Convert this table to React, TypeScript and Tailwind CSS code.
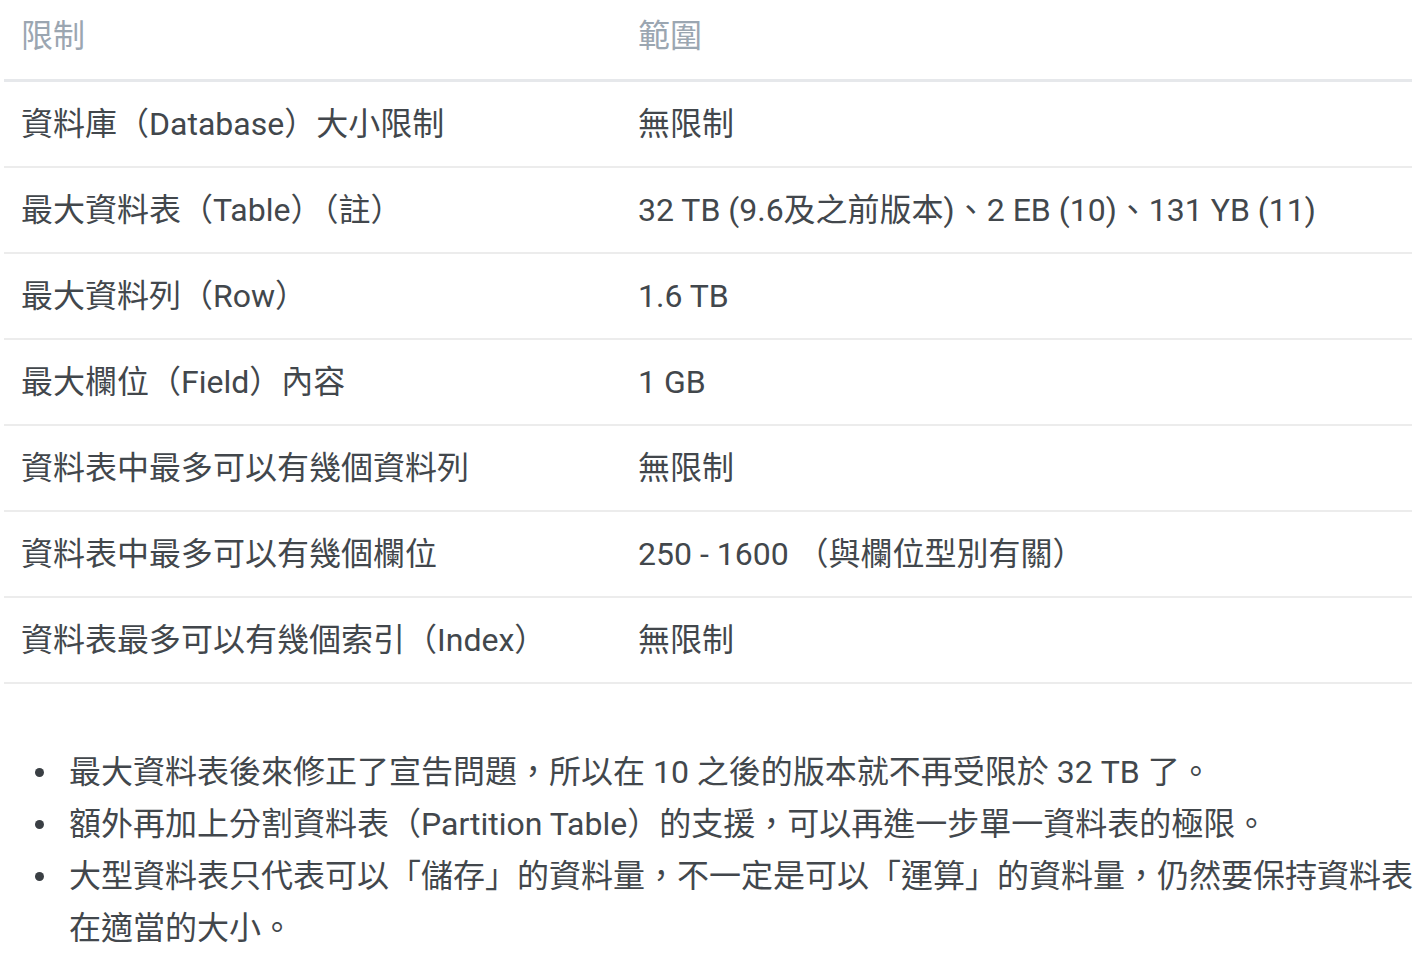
const rows: [string, string][] = [
  ["資料庫（Database）大小限制", "無限制"],
  ["最大資料表（Table）（註）", "32 TB (9.6及之前版本)、2 EB (10)、131 YB (11)"],
  ["最大資料列（Row）", "1.6 TB"],
  ["最大欄位（Field）內容", "1 GB"],
  ["資料表中最多可以有幾個資料列", "無限制"],
  ["資料表中最多可以有幾個欄位", "250 - 1600 （與欄位型別有關）"],
  ["資料表最多可以有幾個索引（Index）", "無限制"],
];

const notes = [
  "最大資料表後來修正了宣告問題，所以在 10 之後的版本就不再受限於 32 TB 了。",
  "額外再加上分割資料表（Partition Table）的支援，可以再進一步單一資料表的極限。",
  "大型資料表只代表可以「儲存」的資料量，不一定是可以「運算」的資料量，仍然要保持資料表在適當的大小。",
];

export default function App() {
  return (
    <div
      className="min-h-screen bg-white pl-[4px] text-[32px] text-[#42474c]"
      style={{ fontFamily: 'Roboto, "Noto Sans CJK TC", sans-serif' }}
    >
      <table className="w-[1408px] table-fixed border-collapse">
        <colgroup>
          <col className="w-[617px]" />
          <col />
        </colgroup>
        <thead>
          <tr className="border-b-[3px] border-[#e6e8eb]">
            <th className="px-[17px] pt-[12px] pb-[19px] text-left font-normal leading-[48px] text-[#9ba6b1]">限制</th>
            <th className="px-[17px] pt-[12px] pb-[19px] text-left font-normal leading-[48px] text-[#9ba6b1]">範圍</th>
          </tr>
        </thead>
        <tbody>
          {rows.map((row, i) => (
            <tr key={i} className="border-b-2 border-[#ececec]">
              <td className="px-[17px] py-[18px] leading-[48px] whitespace-nowrap">{row[0]}</td>
              <td className="px-[17px] py-[18px] leading-[48px] whitespace-nowrap">{row[1]}</td>
            </tr>
          ))}
        </tbody>
      </table>

      <ul className="mt-[62px] w-[1418px] leading-[52px]">
        {notes.map((note, i) => (
          <li key={i} className="flex">
            <span className="flex h-[52px] w-[65px] shrink-0 items-center justify-center">
              <span className="ml-[6px] h-[9px] w-[9px] rounded-full bg-[#3a3f44]" />
            </span>
            <span>{note}</span>
          </li>
        ))}
      </ul>
    </div>
  );
}
